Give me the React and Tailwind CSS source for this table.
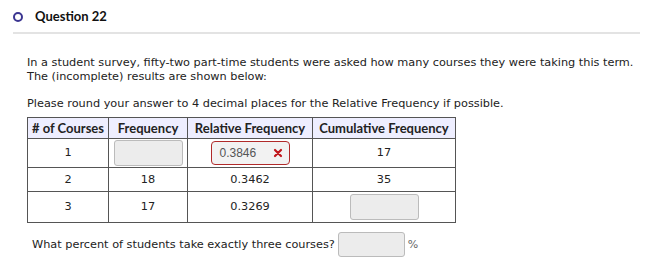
export default function App() {
  const body = { fontFamily: '"DejaVu Sans", sans-serif' }
  const head = { fontFamily: 'Lato, sans-serif' }
  const cell = 'border border-[#555]'
  const box = 'mx-auto h-[26px] rounded-[3px] border border-[#bbb] bg-[#ececec]'
  return (
    <div className="w-[667px] h-[270px] bg-white text-[#222] overflow-hidden">
      {/* Question header */}
      <div className="pl-[13px] pr-[27px] pt-[11px]">
        <div className="flex items-center gap-[12px] h-[12px]">
          <span className="w-[10px] h-[10px] rounded-full border-2 border-[#3b3591] box-border" />
          <span className="text-[13px] font-bold text-[#111]" style={head}>Question 22</span>
        </div>
        <div className="mt-[9px] h-[2px] bg-[#e3e3e3]" />
      </div>

      <div className="pl-[27px] pt-[22px] text-[11.3px] leading-[14px]" style={body}>
        <p>In a student survey, fifty-two part-time students were asked how many courses they were taking this term.</p>
        <p>The (incomplete) results are shown below:</p>
        <p className="mt-[13px]">Please round your answer to 4 decimal places for the Relative Frequency if possible.</p>

        <table className="mt-[6px] w-[428px] table-fixed border-collapse border border-[#555]">
          <colgroup>
            <col className="w-[81px]" />
            <col className="w-[79px]" />
            <col className="w-[125px]" />
            <col className="w-[143px]" />
          </colgroup>
          <thead>
            <tr className="bg-[#eeeeff] h-[21px] whitespace-nowrap text-[13px]" style={head}>
              <th className={`${cell} font-bold`}># of Courses</th>
              <th className={`${cell} font-bold`}>Frequency</th>
              <th className={`${cell} font-bold`}>Relative Frequency</th>
              <th className={`${cell} font-bold`}>Cumulative Frequency</th>
            </tr>
          </thead>
          <tbody className="text-center">
            <tr className="h-[29px]">
              <td className={cell}>1</td>
              <td className={cell}>
                <div className={`${box} w-[69px]`} />
              </td>
              <td className={cell}>
                <div className="mx-auto w-[79px] h-[24px] rounded-[4px] border border-[#b02a2a] bg-[#f2f2f2] flex items-center justify-between pl-[8px] pr-[6px]">
                  <span className="text-[#555] text-[12px]" style={{ fontFamily: '"Liberation Sans", sans-serif' }}>0.3846</span>
                  <svg width="10" height="10" viewBox="0 0 10 10">
                    <path d="M2 2 L8 8 M8 2 L2 8" stroke="#c0161b" strokeWidth="2.2" strokeLinecap="round" />
                  </svg>
                </div>
              </td>
              <td className={cell}>17</td>
            </tr>
            <tr className="h-[24px]">
              <td className={cell}>2</td>
              <td className={cell}>18</td>
              <td className={cell}>0.3462</td>
              <td className={cell}>35</td>
            </tr>
            <tr className="h-[31px]">
              <td className={cell}>3</td>
              <td className={cell}>17</td>
              <td className={cell}>0.3269</td>
              <td className={cell}>
                <div className={`${box} w-[69px]`} />
              </td>
            </tr>
          </tbody>
        </table>

        <div className="mt-[9px] pl-[5px] flex items-center gap-[3px]">
          <span>What percent of students take exactly three courses?</span>
          <div className="w-[67px] h-[25px] rounded-[3px] border border-[#bbb] bg-[#ececec]" />
          <span className="text-[#666] text-[11px]">%</span>
        </div>
      </div>
    </div>
  )
}
